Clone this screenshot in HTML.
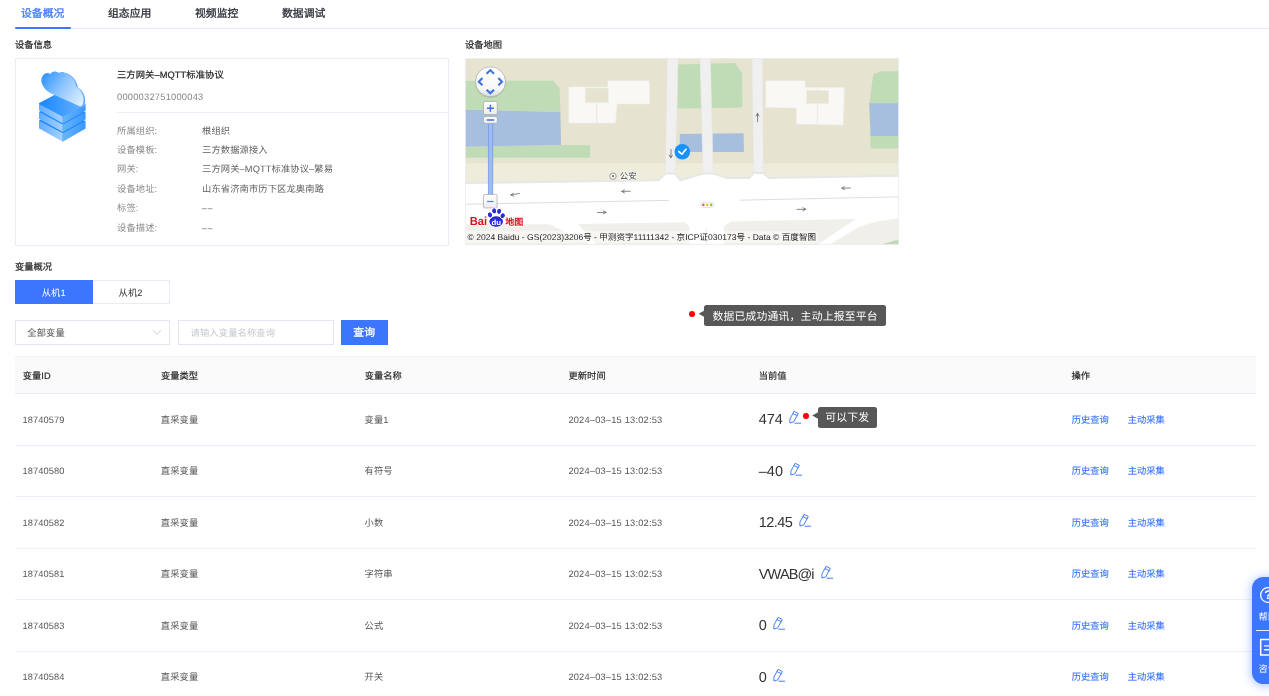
<!DOCTYPE html>
<html lang="zh-CN">
<head>
<meta charset="utf-8">
<title>设备概况</title>
<style>
*{box-sizing:border-box;margin:0;padding:0}
html,body{width:1269px;height:696px;overflow:hidden;background:#fff}
body{will-change:transform;text-rendering:geometricPrecision;font-family:"Liberation Sans",sans-serif;color:#333;font-size:9.28px;position:relative;letter-spacing:.12px}
.abs{position:absolute}
svg text{letter-spacing:0}
/* tabs */
.tabs{position:absolute;left:15px;top:0;width:1254px;height:29px;border-bottom:1px solid #e8ebf5}
.tab{position:absolute;top:1.2px;height:28px;line-height:27.8px;-webkit-text-stroke:.3px;font-size:10.83px;font-weight:500;color:#2b2f36;white-space:nowrap;letter-spacing:0}
.tab.on{color:#3c76ff}
.tabbar{position:absolute;left:0;top:27px;width:56px;height:2.1px;background:#3c76ff;border-radius:1px}
.sec{position:absolute;margin-top:0;-webkit-text-stroke:.2px;font-size:9.28px;font-weight:500;color:#1f1f1f;white-space:nowrap;line-height:12px;letter-spacing:0}
/* info card */
.card{position:absolute;left:15px;top:58px;width:434px;height:187.6px;border:1px solid #ecedf6;background:#fff}
.ct{position:absolute;white-space:nowrap;line-height:14px;font-size:9.28px}
.t1{left:117px;-webkit-text-stroke:.2px;font-weight:500;color:#1f1f1f;letter-spacing:.1px}
.t2{left:117px;color:#858585;letter-spacing:.25px}
.hr{position:absolute;left:117px;width:331px;top:111.5px;height:1px;background:#ecedf6}
.k{left:117px;color:#8a8a8a}
.v{left:202px;color:#606060}
.v b{font-weight:normal;letter-spacing:1px;font-size:8.6px}
/* map */
.map{position:absolute;left:465px;top:58px;width:434px;height:187px;overflow:hidden;background:#e6e3d1}
/* controls */
.btn1{position:absolute;left:15px;top:279.6px;width:77.5px;height:24.7px;background:#3c76ff;color:#fff;text-align:center;line-height:26.4px;font-size:9.28px}
.btn2{position:absolute;left:92.5px;top:279.6px;width:77.2px;height:24.7px;border:1px solid #e8eaf4;border-left:none;color:#333;text-align:center;line-height:24.4px;font-size:9.28px;background:#fff}
.sel{position:absolute;left:15px;top:320.2px;width:154.7px;height:24.7px;border:1px solid #e4e7f1;line-height:24.2px;padding-left:11.3px;font-size:9.28px;color:#555}
.inp{position:absolute;left:178px;top:320.2px;width:155.6px;height:24.7px;border:1px solid #e4e7f1;line-height:24.2px;padding-left:11.6px;font-size:9.28px;color:#c5c8ce}
.qry{position:absolute;left:341px;top:319.8px;width:46.7px;height:25px;background:#3c76ff;color:#fff;text-align:center;line-height:27.2px;font-size:10.83px;font-weight:500;letter-spacing:.3px;-webkit-text-stroke:.3px}
/* tooltips */
.dot{position:absolute;width:6.4px;height:6.4px;border-radius:50%;background:#ff0000}
.tip{position:absolute;background:#575757;color:#fff;font-size:10.83px;border-radius:2.5px;white-space:nowrap;text-align:center;letter-spacing:.2px}
.tip i{position:absolute;left:-5.3px;width:6.3px;height:7px;background:#575757;clip-path:polygon(0 50%,100% 0,100% 100%)}
/* table */
.th{position:absolute;left:14.8px;top:356.2px;width:1241.4px;height:37.8px;background:#fafafa;border-top:1px solid #f0f1f8;border-bottom:1px solid #e9ebf6}
.th span{position:absolute;top:.8px;margin-left:.6px;-webkit-text-stroke:.15px;line-height:37.6px;font-size:9.28px;font-weight:500;color:#1f1f1f;white-space:nowrap;letter-spacing:0}
.tr{position:absolute;left:14.8px;width:1241.4px;height:52px;border-bottom:1px solid #eeeff8}
.tr.last{border-bottom:none}
.tr span{position:absolute;top:1.2px;margin-left:.6px;line-height:51.6px;font-size:9.28px;color:#555;white-space:nowrap}
.tr .val{font-size:14.5px;color:#333;letter-spacing:0;line-height:51.2px;margin-left:0;top:1.7px}
.tr .a{color:#3571ff;letter-spacing:0;-webkit-text-stroke:.12px}
.pen{position:absolute}
/* float */
.flt{position:absolute;left:1252.4px;top:576.6px;width:40px;height:107.6px;border-radius:11.5px;background:#3c76ff;box-shadow:0 1px 10px 1px rgba(60,118,255,.42);color:#fff;font-size:9.28px;overflow:visible}
.flt span{position:absolute;left:6.2px;line-height:12px;white-space:nowrap;letter-spacing:0}
.flt .ln{position:absolute;left:3.6px;top:53px;width:40px;height:1px;background:#fff;opacity:.9}
</style>
</head>
<body>
<div class="tabs">
  <div class="tab on" style="left:6px">设备概况</div>
  <div class="tab" style="left:93px">组态应用</div>
  <div class="tab" style="left:180px">视频监控</div>
  <div class="tab" style="left:267px">数据调试</div>
  <div class="tabbar"></div>
</div>
<div class="sec" style="left:15px;top:39px">设备信息</div>
<div class="sec" style="left:465px;top:39px">设备地图</div>

<div class="card"></div>
<svg class="abs" style="left:35px;top:62px" width="80" height="86" viewBox="35 62 80 86">
  <defs>
    <linearGradient id="gtop" x1="0" y1="0" x2="1" y2="0"><stop offset="0" stop-color="#1a86ff"/><stop offset="1" stop-color="#6ab3ff"/></linearGradient>
    <linearGradient id="glf" x1="0" y1="0" x2="1" y2="0"><stop offset="0" stop-color="#62acff"/><stop offset="1" stop-color="#a6d3ff"/></linearGradient>
    <linearGradient id="grt" x1="0" y1="0" x2="1" y2="0"><stop offset="0" stop-color="#6cb3ff"/><stop offset="1" stop-color="#3a99ff"/></linearGradient>
    <linearGradient id="gcl" x1="0" y1="0.2" x2="1" y2="0.8"><stop offset="0" stop-color="#3296ff"/><stop offset="0.42" stop-color="#86c1ff"/><stop offset="1" stop-color="#dcedff"/></linearGradient>
  </defs>
  <g stroke-linejoin="round">
    <!-- layer 3 -->
    <g transform="translate(0,17.3)">
      <polygon points="39.6,103.6 62.8,116 85,104.2 61.6,91.8" fill="#1f8bff" stroke="#1f8bff" stroke-width="1.2"/>
      <polygon points="39.6,104.4 62.8,116.8 62.8,123.6 39.6,110.6" fill="url(#glf)" stroke="url(#glf)" stroke-width="1.2"/>
      <polygon points="62.8,116.8 85,104.8 85,111 62.8,123.6" fill="url(#grt)" stroke="url(#grt)" stroke-width="1.2"/>
      <circle cx="65.4" cy="119.4" r="0.7" fill="#37d39a"/><circle cx="70.4" cy="116.9" r="0.7" fill="#37d39a"/>
    </g>
    <!-- layer 2 -->
    <g transform="translate(0,8.6)">
      <polygon points="39.6,103.6 62.8,116 85,104.2 61.6,91.8" fill="#1f8bff" stroke="#1f8bff" stroke-width="1.2"/>
      <polygon points="39.6,104.4 62.8,116.8 62.8,122.6 39.6,109.8" fill="url(#glf)" stroke="url(#glf)" stroke-width="1.2"/>
      <polygon points="62.8,116.8 85,104.8 85,110.4 62.8,122.6" fill="url(#grt)" stroke="url(#grt)" stroke-width="1.2"/>
      <circle cx="65.4" cy="119.4" r="0.7" fill="#37d39a"/><circle cx="67.9" cy="118.1" r="0.7" fill="#37d39a"/>
    </g>
    <!-- layer 1 -->
    <polygon points="39.6,104.4 62.8,116.8 62.8,122.6 39.6,109.8" fill="url(#glf)" stroke="url(#glf)" stroke-width="1.2"/>
    <polygon points="62.8,116.8 85,104.8 85,110.4 62.8,122.6" fill="url(#grt)" stroke="url(#grt)" stroke-width="1.2"/>
    <polygon points="39.6,103.6 62.8,116 85,104.2 61.6,91.8" fill="url(#gtop)" stroke="url(#gtop)" stroke-width="1.2"/>
    <circle cx="65.4" cy="119" r="0.7" fill="#37d39a"/><circle cx="67.9" cy="117.7" r="0.7" fill="#37d39a"/><circle cx="70.4" cy="116.4" r="0.7" fill="#37d39a"/>
  </g>
  <!-- cloud -->
  <path id="cl" transform="translate(0.7,0.2) translate(0,106.8) scale(1,0.965) translate(0,-106.8)" fill="#6ab0ff" d="M53.5,93.9 C49,92.5 44,88 42.6,82 C41.8,77 44.5,72.5 48.6,72.3 C50,72.3 50.8,73 51.4,73.8 C52.5,71.5 54.5,70.6 56.5,70.9 C58,71.2 59,72 59.6,72.8 C61,71.6 63,71.2 65,71.6 C71,72.8 76,79 77.4,86.5 C81,88.5 84.5,94 84.6,100 C84.7,104 83.5,106.5 81.4,106.8 Z"/>
  <path transform="translate(-1.1,-0.4) translate(0,106.8) scale(1,0.97) translate(0,-106.8)" fill="url(#gcl)" d="M53.5,93.9 C49,92.5 44,88 42.6,82 C41.8,77 44.5,72.5 48.6,72.3 C50,72.3 50.8,73 51.4,73.8 C52.5,71.5 54.5,70.6 56.5,70.9 C58,71.2 59,72 59.6,72.8 C61,71.6 63,71.2 65,71.6 C71,72.8 76,79 77.4,86.5 C81,88.5 84.5,94 84.6,100 C84.7,104 83.5,106.5 81.4,106.8 Z"/>
</svg>

<div class="ct t1" style="top:67.7px">三方网关–MQTT标准协议</div>
<div class="ct t2" style="top:89.6px">0000032751000043</div>
<div class="hr"></div>
<div class="ct k" style="top:123.5px">所属组织:</div><div class="ct v" style="top:123.5px">根组织</div>
<div class="ct k" style="top:142.9px">设备模板:</div><div class="ct v" style="top:142.9px">三方数据源接入</div>
<div class="ct k" style="top:162.3px">网关:</div><div class="ct v" style="top:162.3px">三方网关–MQTT标准协议–繁易</div>
<div class="ct k" style="top:181.7px">设备地址:</div><div class="ct v" style="top:181.7px">山东省济南市历下区龙奥南路</div>
<div class="ct k" style="top:201.1px">标签:</div><div class="ct v" style="top:201.1px"><b>––</b></div>
<div class="ct k" style="top:220.5px">设备描述:</div><div class="ct v" style="top:220.5px"><b>––</b></div>

<div class="map" id="map">
<svg class="mapsvg" width="434" height="187" viewBox="465 58 434 187" style="display:block">
  <defs>
    <linearGradient id="gpan" x1="0" y1="0" x2="0" y2="1"><stop offset="0" stop-color="#ffffff"/><stop offset="0.7" stop-color="#f8f8f8"/><stop offset="1" stop-color="#dcdcdc"/></linearGradient>
    <linearGradient id="gbtn" x1="0" y1="0" x2="0" y2="1"><stop offset="0" stop-color="#ffffff"/><stop offset="1" stop-color="#ececec"/></linearGradient>
  </defs>
  <rect x="465" y="58" width="434" height="187" fill="#e6e3d1"/>
  <!-- lighter band above road -->
  <rect x="465" y="163.3" width="434" height="25" fill="#eeecda"/>
  <!-- greens -->
  <polygon points="465,80.7 553,80.7 559.5,88 560.5,112 465,109.8" fill="#c0dcb7"/>
  <polygon points="465,146.7 561,144.9 590,145.3 590,157.8 465,157.8" fill="#c0dcb7"/>
  <polygon points="678,64.6 735,63 742,73.5 742.5,106 740,107.8 677.5,108.6" fill="#c0dcb7"/>
  <polygon points="873.3,74.2 881,71.3 899,71.3 899,148.4 870.7,148.4 869.3,103.2" fill="#c0dcb7"/>
  <!-- waters -->
  <polygon points="465,109.8 560.4,112 561,144.9 465,146.7" fill="#a6bfdf"/>
  <polygon points="679.8,134 743.6,133.2 743.9,151.9 679.8,151.9" fill="#a6bfdf"/>
  <polygon points="869.3,103.2 899,103.2 899,136.1 870.7,136.1" fill="#a6bfdf"/>
  <!-- buildings -->
  <polygon points="568.8,86.9 607.8,86.9 607.8,80.8 649.4,80.8 649.4,104 617,104 615.6,123.1 568.8,123.1" fill="#f9f8f5" stroke="#efeee8" stroke-width="0.6"/>
  <rect x="585.2" y="88" width="23.1" height="14.8" fill="#e6e3d1" stroke="#efeee8" stroke-width="0.6"/>
  <line x1="596.6" y1="102.8" x2="596.6" y2="123.1" stroke="#ecebe6" stroke-width="1.5"/>
  <polygon points="765.8,80.8 805.2,80.8 805.2,87.6 844.4,87.6 843.2,125 796.5,124.1 796.5,107.9 765.8,107.4" fill="#f9f8f5" stroke="#efeee8" stroke-width="0.6"/>
  <rect x="806.6" y="90.3" width="22" height="13.4" fill="#e6e3d1" stroke="#efeee8" stroke-width="0.6"/>
  <line x1="817.5" y1="103.7" x2="817.5" y2="124.6" stroke="#ecebe6" stroke-width="1.2"/>
  <line x1="817.5" y1="87.6" x2="817.5" y2="90.3" stroke="#e9e7e0" stroke-width="0.8"/>
  <!-- vertical roads -->
  <polygon points="667.4,58 678,58 675.3,175 665.5,175" fill="#f0f0f0" stroke="#e9e8e2" stroke-width="0.6"/>
  <polygon points="700,58 710.3,58 713.3,175 703.1,175" fill="#f0f0f0" stroke="#e9e8e2" stroke-width="0.6"/>
  <polygon points="752,58 762.4,58 763.3,175 753.8,175" fill="#f0f0f0" stroke="#e9e8e2" stroke-width="0.6"/>
  <!-- main road -->
  <polygon points="455,183.2 658.5,180.3 665.5,173.6 675.3,173.6 680.4,180.3 703.3,173.5 713.3,173.5 727,178 749,178 753.8,173 763.3,173 769,178 909,175.6 909,255 455,255" fill="#ffffff" stroke="#e7e7e5" stroke-width="2" stroke-linejoin="round"/>
  <!-- centre lines -->
  <line x1="465" y1="204.2" x2="668.8" y2="200.4" stroke="#dedede" stroke-width="1"/>
  <line x1="739.8" y1="200.2" x2="899" y2="196.8" stroke="#dedede" stroke-width="1"/>
  <!-- sidewalks -->
  <polygon points="465,224.3 549.7,224.3 591,244.7 591,245 465,245" fill="#f0efe9"/>
  <polygon points="578,224 684.4,222.2 689.4,226.5 689.4,245 597,245" fill="#f0efe9"/>
  <polygon points="724.2,245 724.2,226.3 730.3,221.4 856,219 817,245" fill="#f0efe9"/>
  <path d="M899,218.5 Q872,221 857,228 L829,245 L899,245 Z" fill="#f0efe9"/>
  <polygon points="879.4,245 899,239.3 899,245" fill="#c0dcb7"/>
  <line x1="706.5" y1="229" x2="706.5" y2="245" stroke="#e2e2e2" stroke-width="0.8"/>
  <!-- arrows -->
  <g stroke="#666" stroke-width="0.8" fill="none" stroke-linecap="round" stroke-linejoin="round">
    <path d="M519.4,193.5 L510.8,194.9 M513.4,193.2 L510.8,194.9 L513.8,196.3"/>
    <path d="M630.3,191.2 L621.8,191.4 M624.5,189.9 L621.8,191.4 L624.5,193"/>
    <path d="M850.3,188 L841.8,188.2 M844.5,186.7 L841.8,188.2 L844.5,189.8"/>
    <path d="M597.5,212.6 L606,212.3 M603.3,210.8 L606,212.3 L603.3,213.9"/>
    <path d="M797.2,209.4 L805.7,209.2 M803,207.7 L805.7,209.2 L803,210.8"/>
    <path d="M757.6,121.8 L757.5,113.3 M756,116 L757.5,113.3 L759,116"/>
    <path d="M671.1,149.5 L670.8,157.8 M669.3,155.2 L670.8,157.8 L672.4,155.2"/>
  </g>
  <!-- poi -->
  <circle cx="613" cy="176.2" r="3.2" fill="#fff" stroke="#8a7f7f" stroke-width="0.8"/>
  <circle cx="613" cy="176.2" r="1.1" fill="#8a5f5f"/>
  <text x="619.8" y="179.2" font-family="Liberation Sans, sans-serif" font-size="8.5" fill="#444" stroke="#fff" stroke-width="1.4" paint-order="stroke" stroke-linejoin="round">公安</text>
  <!-- traffic light -->
  <rect x="700.5" y="202.3" width="13.4" height="5.1" rx="2.5" fill="#fff" stroke="#d8d8d8" stroke-width="0.7"/>
  <circle cx="703.3" cy="204.85" r="1.35" fill="#f25c5c"/>
  <circle cx="707.2" cy="204.85" r="1.35" fill="#f5c226"/>
  <circle cx="711.1" cy="204.85" r="1.35" fill="#7ec050"/>
  <!-- marker -->
  <circle cx="682.3" cy="151.8" r="7.8" fill="#1890ff"/>
  <path d="M678.7,151.5 L681.9,154.2 L685.9,149.2" fill="none" stroke="#fff" stroke-width="1.7" stroke-linecap="round" stroke-linejoin="round"/>
  <!-- slider -->
  <rect x="488.3" y="122" width="4.5" height="74" fill="#9dbcf5" stroke="#6f94e0" stroke-width="0.7"/>
  <!-- pan control -->
  <circle cx="490.5" cy="82.3" r="15.4" fill="#000" opacity="0.12"/>
  <circle cx="490.5" cy="81.8" r="15" fill="url(#gpan)" stroke="#a9a9a9" stroke-width="0.7"/>
  <g fill="none" stroke="#3f72dc" stroke-width="2.1" stroke-linejoin="miter">
    <path d="M486.6,73.7 L490.3,70.1 L494,73.7"/>
    <path d="M486.6,89.7 L490.3,93.3 L494,89.7"/>
    <path d="M482.5,78.1 L478.8,81.7 L482.5,85.3"/>
    <path d="M498.3,78.1 L502,81.7 L498.3,85.3"/>
  </g>
  <!-- zoom buttons -->
  <rect x="483.5" y="101.5" width="13.8" height="13.1" rx="1.6" fill="url(#gbtn)" stroke="#a3a3a3" stroke-width="0.7"/>
  <path d="M486.9,108.2 H493.9 M490.4,104.7 V111.7" stroke="#3f72dc" stroke-width="1.5" fill="none"/>
  <rect x="483.5" y="116.6" width="13.8" height="6.8" rx="1.6" fill="url(#gbtn)" stroke="#a3a3a3" stroke-width="0.7"/>
  <path d="M486.7,120 H494.2" stroke="#5b87e6" stroke-width="1.8" fill="none"/>
  <rect x="483.4" y="194.4" width="13.7" height="13.6" rx="1.8" fill="url(#gbtn)" stroke="#a3a3a3" stroke-width="0.7"/>
  <path d="M487.1,201.5 H493.4" stroke="#4d7fe6" stroke-width="1.2" fill="none"/>
  <!-- baidu logo -->
  <g stroke="#fff" stroke-width="2.2" stroke-linejoin="round" paint-order="stroke">
    <text x="469.8" y="225.2" font-family="Liberation Sans, sans-serif" font-size="11.8" font-weight="bold" fill="#e10f1b" paint-order="stroke" textLength="17.4" lengthAdjust="spacingAndGlyphs">Bai</text>
    <g fill="#2a2ae4" paint-order="stroke">
      <ellipse cx="496.2" cy="221.6" rx="6.6" ry="5"/>
      <ellipse cx="490" cy="214.9" rx="1.9" ry="2.3" transform="rotate(-25 490 214.9)"/>
      <ellipse cx="494.2" cy="210.9" rx="1.8" ry="2.4" transform="rotate(-8 494.2 210.9)"/>
      <ellipse cx="499.1" cy="211.3" rx="1.8" ry="2.4" transform="rotate(10 499.1 211.3)"/>
      <ellipse cx="502.7" cy="215.7" rx="1.9" ry="2.3" transform="rotate(28 502.7 215.7)"/>
    </g>
    <text x="505.3" y="225" font-family="Liberation Sans, sans-serif" font-size="9" font-weight="bold" fill="#e10f1b" paint-order="stroke" textLength="18" lengthAdjust="spacingAndGlyphs">地图</text>
  </g>
  <g fill="#2a2ae4">
    <ellipse cx="496.2" cy="221.6" rx="6.6" ry="5"/>
    <ellipse cx="490" cy="214.9" rx="1.9" ry="2.3" transform="rotate(-25 490 214.9)"/>
    <ellipse cx="494.2" cy="210.9" rx="1.8" ry="2.4" transform="rotate(-8 494.2 210.9)"/>
    <ellipse cx="499.1" cy="211.3" rx="1.8" ry="2.4" transform="rotate(10 499.1 211.3)"/>
    <ellipse cx="502.7" cy="215.7" rx="1.9" ry="2.3" transform="rotate(28 502.7 215.7)"/>
  </g>
  <text x="491.4" y="224.6" font-family="Liberation Sans, sans-serif" font-size="7.6" font-weight="bold" fill="#fff" textLength="9.6" lengthAdjust="spacingAndGlyphs">du</text>
  <!-- copyright -->
  <rect x="465" y="231" width="353" height="12" fill="#fff" opacity="0.45"/>
  <text x="467.5" y="239.6" font-family="Liberation Sans, sans-serif" font-size="8.4" fill="#222" textLength="348.5" lengthAdjust="spacingAndGlyphs">© 2024 Baidu - GS(2023)3206号 - 甲测资字11111342 - 京ICP证030173号 - Data © 百度智图</text>
  <rect x="465.5" y="58.5" width="433" height="186" fill="none" stroke="#eceef6" stroke-width="1" opacity="0.8"/>
</svg>
</div>

<div class="sec" style="left:15px;top:260.5px">变量概况</div>
<div class="btn1">从机1</div>
<div class="btn2">从机2</div>
<div class="sel">全部变量<svg class="abs" style="left:135.6px;top:7.7px" width="10" height="7" viewBox="0 0 10 7"><path d="M1.1,1.2 L5,5.4 L8.9,1.2" fill="none" stroke="#c0c4cc" stroke-width="0.8"/></svg></div>
<div class="inp">请输入变量名称查询</div>
<div class="qry">查询</div>

<div class="dot" style="left:688.9px;top:310.5px"></div>
<div class="tip" style="left:703.9px;top:305.4px;width:182.4px;height:20.8px;line-height:24px"><i style="top:4.8px"></i>数据已成功通讯，主动上报至平台</div>

<div class="th">
  <span style="left:7.4px">变量ID</span>
  <span style="left:145.6px">变量类型</span>
  <span style="left:349.4px">变量名称</span>
  <span style="left:553.2px">更新时间</span>
  <span style="left:743.4px">当前值</span>
  <span style="left:1056.2px">操作</span>
</div>

<div class="tr" style="top:393.50px"><span style="left:7px">18740579</span><span style="left:145.4px">直采变量</span><span style="left:349.2px">变量1</span><span style="left:553px;letter-spacing:.2px">2024–03–15 13:02:53</span><span class="val" style="left:744px;letter-spacing:-0.05px">474</span><svg class="pen" style="left:772.8px;top:16.6px" width="14" height="15" viewBox="0 0 14 15"><g fill="none" stroke="#3c76ff" stroke-width="0.95" stroke-linejoin="round" stroke-linecap="round"><path d="M6.4,1.5 L10.3,3.5 L5.6,12 L1.9,13 L1.9,9.5 Z"/><path d="M5.2,3.7 L9.2,5.6"/><path d="M6.9,13.2 H12.7"/></g></svg><span class="a" style="left:1056.3px">历史查询</span><span class="a" style="left:1112.3px">主动采集</span></div>
<div class="tr" style="top:445.05px"><span style="left:7px">18740580</span><span style="left:145.4px">直采变量</span><span style="left:349.2px">有符号</span><span style="left:553px;letter-spacing:.2px">2024–03–15 13:02:53</span><span class="val" style="left:744px;letter-spacing:0px">–40</span><svg class="pen" style="left:774.5px;top:16.6px" width="14" height="15" viewBox="0 0 14 15"><g fill="none" stroke="#3c76ff" stroke-width="0.95" stroke-linejoin="round" stroke-linecap="round"><path d="M6.4,1.5 L10.3,3.5 L5.6,12 L1.9,13 L1.9,9.5 Z"/><path d="M5.2,3.7 L9.2,5.6"/><path d="M6.9,13.2 H12.7"/></g></svg><span class="a" style="left:1056.3px">历史查询</span><span class="a" style="left:1112.3px">主动采集</span></div>
<div class="tr" style="top:496.60px"><span style="left:7px">18740582</span><span style="left:145.4px">直采变量</span><span style="left:349.2px">小数</span><span style="left:553px;letter-spacing:.2px">2024–03–15 13:02:53</span><span class="val" style="left:744px;letter-spacing:-0.58px">12.45</span><svg class="pen" style="left:783.4px;top:16.6px" width="14" height="15" viewBox="0 0 14 15"><g fill="none" stroke="#3c76ff" stroke-width="0.95" stroke-linejoin="round" stroke-linecap="round"><path d="M6.4,1.5 L10.3,3.5 L5.6,12 L1.9,13 L1.9,9.5 Z"/><path d="M5.2,3.7 L9.2,5.6"/><path d="M6.9,13.2 H12.7"/></g></svg><span class="a" style="left:1056.3px">历史查询</span><span class="a" style="left:1112.3px">主动采集</span></div>
<div class="tr" style="top:548.15px"><span style="left:7px">18740581</span><span style="left:145.4px">直采变量</span><span style="left:349.2px">字符串</span><span style="left:553px;letter-spacing:.2px">2024–03–15 13:02:53</span><span class="val" style="left:744px;letter-spacing:-0.87px">VWAB@i</span><svg class="pen" style="left:805.5px;top:16.6px" width="14" height="15" viewBox="0 0 14 15"><g fill="none" stroke="#3c76ff" stroke-width="0.95" stroke-linejoin="round" stroke-linecap="round"><path d="M6.4,1.5 L10.3,3.5 L5.6,12 L1.9,13 L1.9,9.5 Z"/><path d="M5.2,3.7 L9.2,5.6"/><path d="M6.9,13.2 H12.7"/></g></svg><span class="a" style="left:1056.3px">历史查询</span><span class="a" style="left:1112.3px">主动采集</span></div>
<div class="tr" style="top:599.70px"><span style="left:7px">18740583</span><span style="left:145.4px">直采变量</span><span style="left:349.2px">公式</span><span style="left:553px;letter-spacing:.2px">2024–03–15 13:02:53</span><span class="val" style="left:744px;letter-spacing:0px">0</span><svg class="pen" style="left:757.3px;top:16.6px" width="14" height="15" viewBox="0 0 14 15"><g fill="none" stroke="#3c76ff" stroke-width="0.95" stroke-linejoin="round" stroke-linecap="round"><path d="M6.4,1.5 L10.3,3.5 L5.6,12 L1.9,13 L1.9,9.5 Z"/><path d="M5.2,3.7 L9.2,5.6"/><path d="M6.9,13.2 H12.7"/></g></svg><span class="a" style="left:1056.3px">历史查询</span><span class="a" style="left:1112.3px">主动采集</span></div>
<div class="tr last" style="top:651.25px"><span style="left:7px">18740584</span><span style="left:145.4px">直采变量</span><span style="left:349.2px">开关</span><span style="left:553px;letter-spacing:.2px">2024–03–15 13:02:53</span><span class="val" style="left:744px;letter-spacing:0px">0</span><svg class="pen" style="left:757.3px;top:16.6px" width="14" height="15" viewBox="0 0 14 15"><g fill="none" stroke="#3c76ff" stroke-width="0.95" stroke-linejoin="round" stroke-linecap="round"><path d="M6.4,1.5 L10.3,3.5 L5.6,12 L1.9,13 L1.9,9.5 Z"/><path d="M5.2,3.7 L9.2,5.6"/><path d="M6.9,13.2 H12.7"/></g></svg><span class="a" style="left:1056.3px">历史查询</span><span class="a" style="left:1112.3px">主动采集</span></div>

<div class="dot" style="left:802.7px;top:412.5px"></div>
<div class="tip" style="left:817.5px;top:407.2px;width:59.6px;height:20.4px;line-height:23.6px"><i style="top:4.7px"></i>可以下发</div>

<div class="flt">
  <svg class="abs" style="left:6.2px;top:9.6px" width="18" height="18" viewBox="0 0 18 18"><circle cx="8.9" cy="9" r="7.3" fill="none" stroke="#fff" stroke-width="1.3"/><text x="5.2" y="13.4" font-family="Liberation Sans, sans-serif" font-size="12.5" font-weight="bold" fill="#fff">?</text></svg>
  <span style="top:34.2px">帮助</span>
  <div class="ln"></div>
  <svg class="abs" style="left:6.6px;top:61.6px" width="18" height="18" viewBox="0 0 18 18"><path d="M1.7,1.6 H17 V17 H1.7 Z" fill="none" stroke="#fff" stroke-width="1.5"/><path d="M5.2,7.9 H18 M5.2,11.8 H18" stroke="#fff" stroke-width="1.4"/></svg>
  <span style="top:86px">咨询</span>
</div>
</body>
</html>
